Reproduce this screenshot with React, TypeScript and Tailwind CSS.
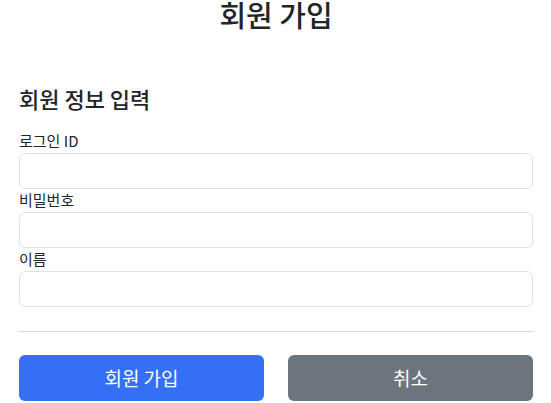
import React from "react";

const fields = [
  { id: "loginId", label: "로그인 ID", type: "text" },
  { id: "password", label: "비밀번호", type: "password" },
  { id: "name", label: "이름", type: "text" },
];

const App = () => {
  return (
    <div className="min-h-screen bg-white pl-[19px] pr-[18px] text-[#212529] font-['Noto_Sans_CJK_KR','Noto_Sans',sans-serif]">
      <h2 className="text-center text-[29px] leading-[28px] font-medium">회원 가입</h2>

      <h4 className="mt-[56px] text-[22px] leading-[28px] font-medium">회원 정보 입력</h4>

      <form className="mt-[18px]">
        {fields.map((field) => (
          <div key={field.id}>
            <label htmlFor={field.id} className="block text-[15px] leading-[22px] pb-[1px]">
              {field.label}
            </label>
            <input
              id={field.id}
              type={field.type}
              className="block h-[36px] w-full rounded-[6px] border border-[#dee2e6] px-3 text-[15px] outline-none"
            />
          </div>
        ))}

        <hr className="mt-[24px] mb-[23px] border-t border-[#d6d6d6]" />

        <div className="grid grid-cols-2 gap-[24px]">
          <button
            type="button"
            className="h-[46px] rounded-[6px] bg-[#3470f4] text-[19px] text-white"
          >
            회원 가입
          </button>
          <button
            type="button"
            className="h-[46px] rounded-[6px] bg-[#6c757d] text-[19px] text-white"
          >
            취소
          </button>
        </div>
      </form>
    </div>
  );
};

export default App;
